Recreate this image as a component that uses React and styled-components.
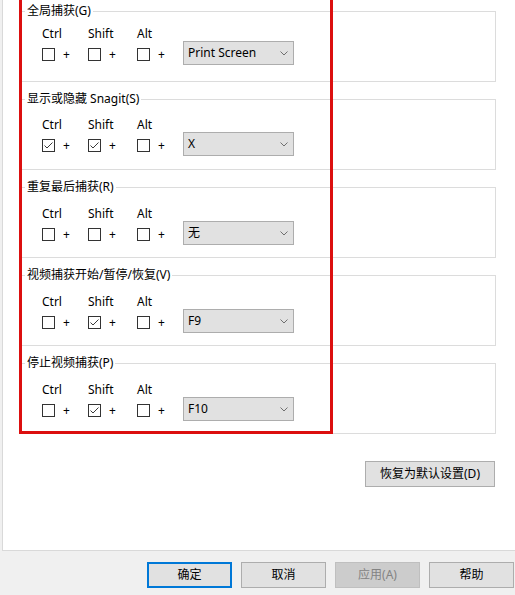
import React from "react";
import styled, { createGlobalStyle } from "styled-components";

const GlobalStyle = createGlobalStyle`
  html, body {
    margin: 0;
    padding: 0;
    background: #f0f0f0;
    overflow: hidden;
  }
  body {
    font-family: "Noto Sans", "Noto Sans CJK SC", sans-serif;
    font-size: 12px;
    color: #000;
  }
`;

const Window = styled.div`
  position: relative;
  width: 515px;
  height: 595px;
  overflow: hidden;
  display: flex;
  flex-direction: column;
`;

const Panel = styled.div`
  margin-left: 2px;
  height: 551px;
  box-sizing: border-box;
  border-left: 1px solid #d9d9d9;
  border-bottom: 1px solid #d9d9d9;
  background: #fff;
  padding: 3px 0 0 17px;
  display: flex;
  flex-direction: column;
`;

const Groups = styled.div`
  display: flex;
  flex-direction: column;
  gap: 9px;
  width: 476px;
`;

const Group = styled.fieldset`
  margin: 0;
  min-width: 0;
  box-sizing: border-box;
  height: 79px;
  border: 1px solid #dcdcdc;
  padding: ${(p) => p.$lead}px 0 0 21px;
`;

const Legend = styled.legend`
  margin-left: -17px;
  padding: 0 2px;
  line-height: 16px;
  font-size: 12px;
`;

const KeyRow = styled.div`
  display: flex;
  align-items: flex-end;
`;

const KeyCol = styled.div`
  width: ${(p) => p.$w}px;
  display: flex;
  flex-direction: column;
  gap: 6px;
`;

const KeyName = styled.span`
  line-height: 16px;
`;

const CheckLine = styled.div`
  display: flex;
  align-items: center;
  height: 13px;
  gap: 8px;
`;

const Box = styled.span`
  width: 13px;
  height: 13px;
  box-sizing: border-box;
  border: 1px solid #333;
  background: #fff;
  display: flex;
`;

const Plus = styled.span`
  line-height: 13px;
`;

const Combo = styled.div`
  width: 111px;
  height: 24px;
  box-sizing: border-box;
  margin-bottom: -4px;
  border: 1px solid #adadad;
  background: #e1e1e1;
  display: flex;
  align-items: center;
  justify-content: space-between;
  padding: 0 5px 0 4px;
  line-height: 16px;
`;

const RestoreRow = styled.div`
  width: 476px;
  display: flex;
  justify-content: flex-end;
  margin-top: 27px;
`;

const Button = styled.button`
  box-sizing: border-box;
  width: ${(p) => p.$w}px;
  height: 26px;
  margin: 0;
  padding: 0;
  font-family: inherit;
  font-size: 12px;
  line-height: 16px;
  color: ${(p) => (p.disabled ? "#838383" : "#000")};
  background: ${(p) => (p.disabled ? "#cccccc" : "#e1e1e1")};
  border: ${(p) =>
    p.$primary
      ? "2px solid #0078d7"
      : p.disabled
      ? "1px solid #bfbfbf"
      : "1px solid #adadad"};
`;

const Footer = styled.div`
  display: flex;
  justify-content: flex-end;
  gap: 9px;
  padding: 11px 1px 0 0;
`;

const Highlight = styled.div`
  position: absolute;
  left: 19px;
  top: -5px;
  width: 314px;
  height: 439px;
  box-sizing: border-box;
  border: 3px solid #dc0f0f;
  pointer-events: none;
`;

const Check = () => (
  <svg width="11" height="11" viewBox="0 0 11 11">
    <polyline
      points="1.5,5.5 4,8 9.5,2.5"
      fill="none"
      stroke="#3a3a3a"
      strokeWidth="1"
    />
  </svg>
);

const Chevron = () => (
  <svg width="8" height="5" viewBox="0 0 8 5">
    <polyline points="0.5,0.5 4,4 7.5,0.5" fill="none" stroke="#6f6f6f" strokeWidth="1" />
  </svg>
);

const keys = [
  { name: "Ctrl", w: 46 },
  { name: "Shift", w: 49 },
  { name: "Alt", w: 46 },
];

const hotkeys = [
  { title: "全局捕获(G)", on: [false, false, false], key: "Print Screen", lead: 7 },
  { title: "显示或隐藏 Snagit(S)", on: [true, true, false], key: "X", lead: 10 },
  { title: "重复最后捕获(R)", on: [false, false, false], key: "无", lead: 11 },
  { title: "视频捕获开始/暂停/恢复(V)", on: [false, true, false], key: "F9", lead: 11 },
  { title: "停止视频捕获(P)", on: [false, true, false], key: "F10", lead: 11 },
];

export default function App() {
  return (
    <>
      <GlobalStyle />
      <Window>
        <Panel>
          <Groups>
            {hotkeys.map((h) => (
              <Group key={h.title} $lead={h.lead}>
                <Legend>{h.title}</Legend>
                <KeyRow>
                  {keys.map((k, i) => (
                    <KeyCol key={k.name} $w={k.w}>
                      <KeyName>{k.name}</KeyName>
                      <CheckLine>
                        <Box>{h.on[i] && <Check />}</Box>
                        <Plus>+</Plus>
                      </CheckLine>
                    </KeyCol>
                  ))}
                  <Combo>
                    <span>{h.key}</span>
                    <Chevron />
                  </Combo>
                </KeyRow>
              </Group>
            ))}
          </Groups>
          <RestoreRow>
            <Button $w={130} style={{ marginRight: 1 }}>恢复为默认设置(D)</Button>
          </RestoreRow>
        </Panel>
        <Footer>
          <Button $w={85} $primary>确定</Button>
          <Button $w={85}>取消</Button>
          <Button $w={85} disabled>应用(A)</Button>
          <Button $w={85}>帮助</Button>
        </Footer>
        <Highlight />
      </Window>
    </>
  );
}
